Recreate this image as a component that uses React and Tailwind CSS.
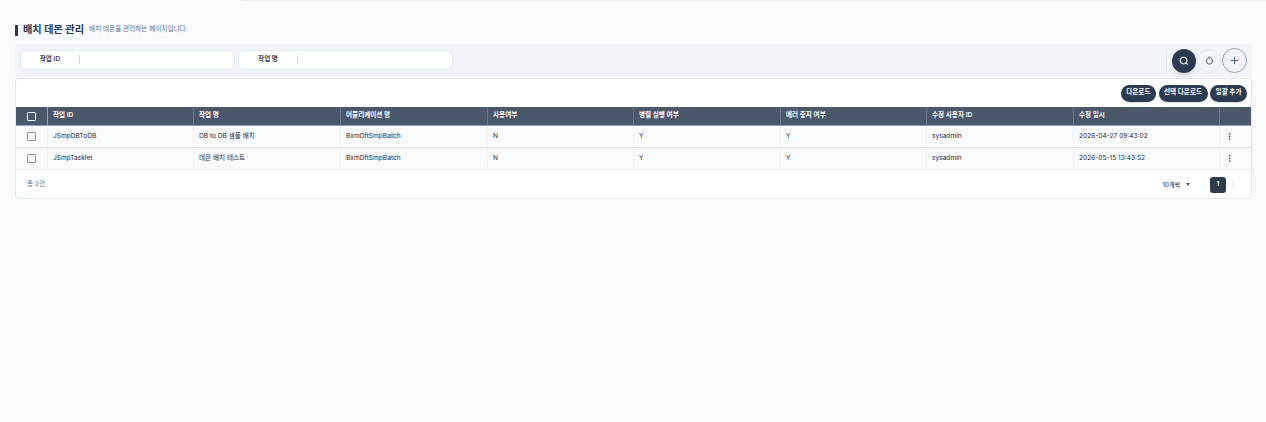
import React from "react"
import { Search, Plus, EllipsisVertical, ChevronLeft, ChevronRight } from "lucide-react"

const columns = ["작업 ID", "작업 명", "어플리케이션 명", "사용여부", "병렬 실행 여부", "에러 중지 여부", "수정 사용자 ID", "수정 일시"]

const rows = [
    ["JSmpDBToDB", "DB to DB 샘플 배치", "BxmDftSmpBatch", "N", "Y", "Y", "sysadmin", "2026-04-27 09:43:02"],
    ["JSmpTasklet", "데몬 배치 테스트", "BxmDftSmpBatch", "N", "Y", "Y", "sysadmin", "2026-05-15 13:43:52"],
]

const gridCols = "grid grid-cols-[32px_146px_147px_147px_146px_147px_146px_147px_146px_31px]"

const Checkbox = ({ dark }) => (
    <span className={`block w-[9px] h-[9px] rounded-[1px] border-[1.5px] ${dark ? "border-[#f1f5f9] bg-[#4b576b]" : "border-[#8b94a3] bg-white"}`}></span>
)

const SearchField = ({ label }) => (
    <div className="w-[215px] h-[20px] flex items-center bg-white rounded-[6px] border border-[#e2e8f0]">
        <span className="w-[58px] text-center text-[6.6px] font-semibold text-[#334155]">{label}</span>
        <span className="w-px h-[9px] bg-[#cbd5e1]"></span>
    </div>
)

const PillButton = ({ children }) => (
    <button className="h-[17px] px-[5.5px] rounded-full bg-[#2d3b50] text-white text-[6.6px] font-semibold shadow-sm">{children}</button>
)

const ResetIcon = () => (
    <svg width="9" height="9" viewBox="0 0 24 24" fill="none" stroke="currentColor" strokeWidth="2.4" strokeLinecap="round" strokeLinejoin="round">
        <path d="M8.5 5.2A8.5 8.5 0 1 0 15.5 5.2" />
        <path d="M12 1.5 9 4.8l3.5 2.4" />
    </svg>
)

const App = () => {
    return (
        <div className="w-[1266px] h-[422px] overflow-hidden bg-[#f8fafc] font-['Inter','Noto_Sans_CJK_KR',sans-serif] text-[#334155]">
            <div className="ml-[242px] h-px bg-[#eef1f5]"></div>

            <div className="pl-[15px] pt-[21px] w-[1252px]">
                <div className="flex items-center h-[16px]">
                    <span className="w-[3px] h-[11px] bg-[#2d3b50]"></span>
                    <h1 className="ml-[5px] text-[10.2px] font-bold text-[#2d3b50]">배치 데몬 관리</h1>
                    <span className="ml-[5px] text-[6.6px] text-[#64748b]">배치 데몬을 관리하는 페이지입니다.</span>
                </div>

                <div className="mt-[6px] h-[33px] flex items-center justify-between bg-[#f1f5f9] pl-[5px] pr-[5px]">
                    <div className="flex gap-[3px] -mt-[2px]">
                        <SearchField label="작업 ID" />
                        <SearchField label="작업 명" />
                    </div>
                    <div className="flex items-center">
                        <span className="w-px h-[24px] bg-[#e2e8f0] mr-[5px]"></span>
                        <button className="w-[24px] h-[24px] rounded-full bg-[#2d3b50] text-white flex items-center justify-center shadow-md">
                            <Search size={10} strokeWidth={2.5} />
                        </button>
                        <button className="ml-[1px] w-[24px] h-[24px] rounded-full border border-[#e2e8f0] text-[#475569] flex items-center justify-center">
                            <ResetIcon />
                        </button>
                        <button className="ml-[1px] w-[25px] h-[25px] rounded-full border border-[#94a3b8] text-[#475569] flex items-center justify-center">
                            <Plus size={11} />
                        </button>
                    </div>
                </div>

                <div className="mt-px h-[121px] bg-white rounded-[4px] border border-[#e2e8f0] overflow-hidden">
                    <div className="h-[28px] flex items-center justify-end gap-[2.5px] pr-[4px]">
                        <PillButton>다운로드</PillButton>
                        <PillButton>선택 다운로드</PillButton>
                        <PillButton>일괄 추가</PillButton>
                    </div>

                    <div className={`${gridCols} h-[19px] bg-[#4b576b] border-b border-[#94a3b8]`}>
                        <div className="flex items-center justify-center border-r border-[#94a3b8]">
                            <Checkbox dark />
                        </div>
                        {columns.map((col) => (
                            <div key={col} className="flex items-center pl-[5px] border-r border-[#6b7688] text-[6.6px] font-semibold text-white">{col}</div>
                        ))}
                        <div></div>
                    </div>

                    {rows.map((row) => (
                        <div key={row[0]} className={`${gridCols} h-[22px] bg-[#f8fafc] border-b border-[#e2e8f0]`}>
                            <div className="flex items-center justify-center border-r border-[#eef1f5]">
                                <Checkbox />
                            </div>
                            {row.map((cell, i) => (
                                <div key={i} className="flex items-center pl-[5px] pt-px border-r border-[#eef1f5] text-[6.6px] text-[#1e293b]">{cell}</div>
                            ))}
                            <div className="flex items-center pl-[5px] text-[#475569]">
                                <EllipsisVertical size={9} strokeWidth={2.5} />
                            </div>
                        </div>
                    ))}

                    <div className="h-[29px] flex items-center justify-between pl-[11px] pr-[14px]">
                        <span className="text-[6.6px] text-[#64748b]">총 2건</span>
                        <div className="flex items-center">
                            <span className="text-[6px] text-[#334155] font-medium">10개씩</span>
                            <span className="ml-[6px] w-0 h-0 border-x-[2.5px] border-x-transparent border-t-[3px] border-t-[#475569]"></span>
                            <ChevronLeft size={8} className="ml-[9px] text-[#cbd5e1]" />
                            <span className="ml-[3px] w-[16px] h-[16px] rounded-[3px] bg-[#2d3b50] text-white text-[6.6px] font-semibold flex items-center justify-center">1</span>
                            <ChevronRight size={8} className="ml-[3px] text-[#cbd5e1]" />
                        </div>
                    </div>
                </div>
            </div>
        </div>
    )
}

export default App
